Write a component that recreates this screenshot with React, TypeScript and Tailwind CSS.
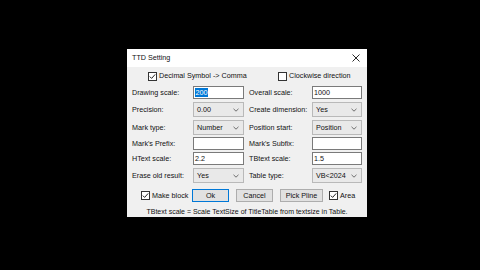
import React from 'react';

const font = "font-['Liberation_Sans',Arial,sans-serif]";

const CheckBox = ({ checked }: { checked: boolean }) => (
  <svg width="9" height="9" viewBox="0 0 9 9" className="shrink-0">
    <rect x="0.5" y="0.5" width="8" height="8" fill="#ffffff" stroke="#333333" strokeWidth="1" />
    {checked && <path d="M1.8 4.6 L3.6 6.4 L7.2 2.4" fill="none" stroke="#222222" strokeWidth="1" />}
  </svg>
);

const TextBox = ({ value, selected }: { value: string; selected?: boolean }) => (
  <div className="h-full w-full bg-white border border-[#7a7a7a] flex items-center pl-[1px]">
    {selected ? (
      <span className="bg-[#0078d7] text-white leading-[9px] px-[0.5px]">{value}</span>
    ) : (
      <span className="leading-none">{value}</span>
    )}
  </div>
);

const Select = ({ value }: { value: string }) => (
  <div className="h-full w-full bg-[#e9e9e9] border border-[#b9b9b9] flex items-center justify-between pl-[3px] pr-[4px]">
    <span className="leading-none">{value}</span>
    <svg width="6" height="4" viewBox="0 0 6 4">
      <path d="M0.5 0.8 L3 3.2 L5.5 0.8" fill="none" stroke="#606060" strokeWidth="0.9" />
    </svg>
  </div>
);

type Ctl = { kind: 'text' | 'select'; value: string; selected?: boolean };

const Field = ({ c }: { c: Ctl }) =>
  c.kind === 'text' ? <TextBox value={c.value} selected={c.selected} /> : <Select value={c.value} />;

const Row = ({
  top,
  height,
  left,
  leftCtl,
  right,
  rightCtl,
}: {
  top: string;
  height: string;
  left: string;
  leftCtl: Ctl;
  right: string;
  rightCtl: Ctl;
}) => (
  <div className={`flex items-center pl-[5px] ${top} ${height}`}>
    <div className="w-[61px] leading-none">{left}</div>
    <div className="w-[51px] h-full">
      <Field c={leftCtl} />
    </div>
    <div className="w-[63px] ml-[5px] leading-none">{right}</div>
    <div className="w-[50px] h-full">
      <Field c={rightCtl} />
    </div>
  </div>
);

const Button = ({ label, width, primary }: { label: string; width: string; primary?: boolean }) => (
  <div
    className={`h-full ${width} flex items-center justify-center bg-[#e1e1e1] border ${
      primary ? 'border-[#0078d7]' : 'border-[#adadad]'
    }`}
  >
    <span className="leading-none">{label}</span>
  </div>
);

export default function App() {
  return (
    <div className={`w-[480px] h-[270px] bg-black pl-[127px] pt-[49px] ${font} text-[7.2px] text-[#111111]`}>
      <div className="w-[240px] h-[168px] bg-[#f0f0f0] flex flex-col">
        {/* Title bar */}
        <div className="h-[18px] bg-white flex items-center justify-between pl-[5px] pr-[7px]">
          <span className="leading-none">TTD Setting</span>
          <svg width="8" height="8" viewBox="0 0 8 8">
            <path d="M0.5 0.5 L7.5 7.5 M7.5 0.5 L0.5 7.5" stroke="#111111" strokeWidth="0.9" />
          </svg>
        </div>

        {/* Options */}
        <div className="mt-[3px] h-[12px] flex items-center pl-[21px]">
          <div className="w-[130px] flex items-center gap-[2px]">
            <CheckBox checked />
            <span className="leading-none">Decimal Symbol -&gt; Comma</span>
          </div>
          <div className="flex items-center gap-[2px]">
            <CheckBox checked={false} />
            <span className="leading-none">Clockwise direction</span>
          </div>
        </div>

        <Row
          top="mt-[4px]"
          height="h-[13px]"
          left="Drawing scale:"
          leftCtl={{ kind: 'text', value: '200', selected: true }}
          right="Overall scale:"
          rightCtl={{ kind: 'text', value: '1000' }}
        />
        <Row
          top="mt-[3px]"
          height="h-[15px]"
          left="Precision:"
          leftCtl={{ kind: 'select', value: '0.00' }}
          right="Create dimension:"
          rightCtl={{ kind: 'select', value: 'Yes' }}
        />
        <Row
          top="mt-[3px]"
          height="h-[15px]"
          left="Mark type:"
          leftCtl={{ kind: 'select', value: 'Number' }}
          right="Position start:"
          rightCtl={{ kind: 'select', value: 'Position' }}
        />
        <Row
          top="mt-[2px]"
          height="h-[13px]"
          left="Mark's Prefix:"
          leftCtl={{ kind: 'text', value: '' }}
          right="Mark's Subfix:"
          rightCtl={{ kind: 'text', value: '' }}
        />
        <Row
          top="mt-[2px]"
          height="h-[13px]"
          left="HText scale:"
          leftCtl={{ kind: 'text', value: '2.2' }}
          right="TBtext scale:"
          rightCtl={{ kind: 'text', value: '1.5' }}
        />
        <Row
          top="mt-[3px]"
          height="h-[15px]"
          left="Erase old result:"
          leftCtl={{ kind: 'select', value: 'Yes' }}
          right="Table type:"
          rightCtl={{ kind: 'select', value: 'VB<2024' }}
        />

        {/* Actions */}
        <div className="mt-[6px] h-[13px] flex items-center pl-[14px]">
          <div className="w-[51px] flex items-center gap-[2px]">
            <CheckBox checked />
            <span className="leading-none">Make block</span>
          </div>
          <Button label="Ok" width="w-[37px]" primary />
          <div className="w-[7px]" />
          <Button label="Cancel" width="w-[37px]" />
          <div className="w-[7px]" />
          <Button label="Pick Pline" width="w-[43px]" />
          <div className="ml-[6px] flex items-center gap-[2px]">
            <CheckBox checked />
            <span className="leading-none">Area</span>
          </div>
        </div>

        <div className="mt-[3px] h-[12px] flex items-center justify-center">
          <span className="leading-none text-[7px]">TBtext scale = Scale TextSize of TitleTable from textsize in Table.</span>
        </div>
      </div>
    </div>
  );
}
